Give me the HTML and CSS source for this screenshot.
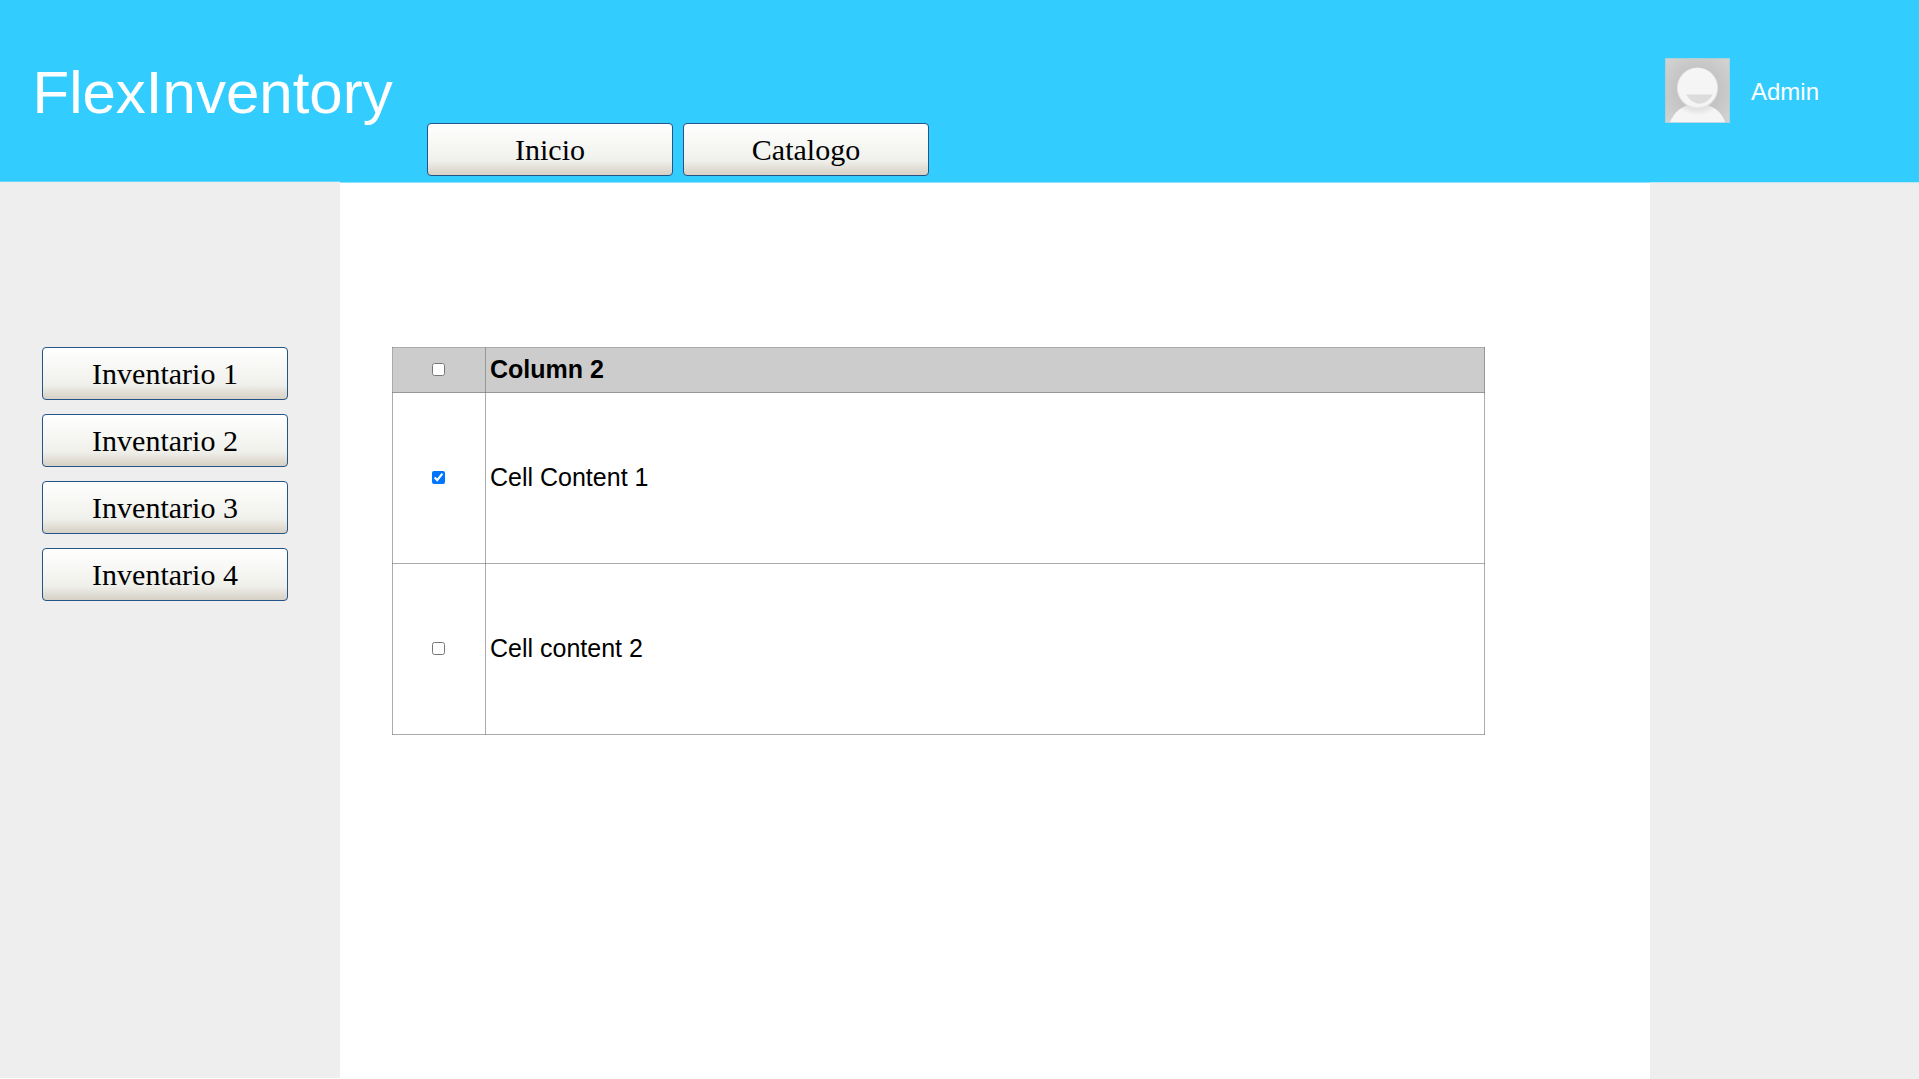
FILE: index.html
```html
<!DOCTYPE html>
<html lang="es">
<head>
<meta charset="utf-8">
<title>FlexInventory</title>
<link rel="stylesheet" href="styles.css">
</head>
<body>
<header class="header">
  <h1 class="brand">FlexInventory</h1>
  <nav class="tabs">
    <button class="btn">Inicio</button>
    <button class="btn">Catalogo</button>
  </nav>
  <div class="user">
    <svg class="avatar" viewBox="0 0 64 64" aria-hidden="true">
      <defs>
        <radialGradient id="back" cx="50%" cy="50%" r="65%">
          <stop offset="0.5" stop-color="#c4c4c4"/>
          <stop offset="1" stop-color="#d2d2d2"/>
        </radialGradient>
        <radialGradient id="body" gradientUnits="userSpaceOnUse" cx="32" cy="29" r="29">
          <stop offset="0.66" stop-color="#dadada"/>
          <stop offset="0.95" stop-color="#f5f5f5"/>
        </radialGradient>
      </defs>
      <rect width="64" height="64" fill="url(#back)"/>
      <path d="M4.500 64C9 53 17 45 32 45S56 53 59.500 64Z" fill="url(#body)"/>
      <circle cx="32" cy="29.500" r="20.200" fill="#e6e6e6"/>
      <circle cx="32" cy="29.200" r="19.300" fill="#f5f5f5"/>
      <path d="M21 36H47C43.500 42 39.500 45 34 45S24.500 42 21 36Z" fill="#dcdcdc"/>
      <rect x=".5" y=".5" width="63" height="63" fill="none" stroke="#a0cfe0" stroke-opacity=".7"/>
    </svg>
    <span class="user-name">Admin</span>
  </div>
</header>
<div class="page">
  <aside class="side side-left">
    <button class="btn">Inventario 1</button>
    <button class="btn">Inventario 2</button>
    <button class="btn">Inventario 3</button>
    <button class="btn">Inventario 4</button>
  </aside>
  <main class="content">
    <table class="grid">
      <thead>
        <tr><th class="check"><input type="checkbox"></th><th>Column 2</th></tr>
      </thead>
      <tbody>
        <tr><td class="check"><input type="checkbox" checked></td><td>Cell Content 1</td></tr>
        <tr><td class="check"><input type="checkbox"></td><td>Cell content 2</td></tr>
      </tbody>
    </table>
  </main>
  <aside class="side side-right"></aside>
</div>
</body>
</html>
```
FILE: styles.css
```css
* { box-sizing: border-box; }

body {
  margin: 0;
  height: 100vh;
  display: flex;
  flex-direction: column;
  overflow: hidden;
  background: #fff;
  font-family: "Liberation Sans", Arial, sans-serif;
  color: #000;
}

.header {
  height: 182px;
  flex: none;
  display: flex;
  align-items: flex-start;
  padding-left: 32.5px;
  background: #33ccff;
  color: #fff;
}

.brand {
  width: 394.5px;
  margin: 0;
  padding-top: 58px;
  font-size: 60px;
  font-weight: 400;
  line-height: 69px;
}

.tabs {
  display: flex;
  gap: 10px;
  padding-top: 123px;
}

.btn {
  display: block;
  flex: none;
  width: 246px;
  height: 53px;
  padding: 1px 0 0;
  border: 1px solid #245488;
  border-radius: 4px;
  background: linear-gradient(#fff 0%, #f0f0eb 72%, #d6d0c5 100%);
  font: 30px/34px "Liberation Serif", "Times New Roman", serif;
  color: #000;
}

.user {
  display: flex;
  gap: 21px;
  margin-left: auto;
  padding: 58px 100px 0 0;
}

.avatar {
  width: 65px;
  height: 65px;
}

.user-name {
  padding-top: 20px;
  font-size: 24px;
  line-height: 27px;
}

.page {
  flex: 1;
  display: flex;
}

.side {
  background: #eee;
}

.side-left {
  width: 340px;
  margin: -1px 0 1px;
  padding: 165px 0 0 42px;
  border-top: 1px solid #66d5fb;
  display: flex;
  flex-direction: column;
  gap: 14px;
}

.side-right {
  width: 269px;
  border-top: 1px solid #bfe5f3;
}

.content {
  flex: 1;
  padding: 164px 0 0 52px;
  border-top: 1px solid #8ce2ff;
}

.grid {
  width: 1093px;
  border-collapse: collapse;
  table-layout: fixed;
  font-size: 25px;
  line-height: 28px;
}

.grid th,
.grid td {
  height: 171px;
  padding: 0 4px 2px;
  border: 1px solid rgba(115, 115, 115, 0.6);
  text-align: left;
  vertical-align: middle;
}

.grid th {
  height: 45px;
  background: #ccc;
}

.grid .check {
  width: 93px;
  padding: 0 2px 2px 0;
  text-align: center;
}

.check input {
  display: block;
  width: 13px;
  height: 13px;
  margin: 0 auto;
}
```
